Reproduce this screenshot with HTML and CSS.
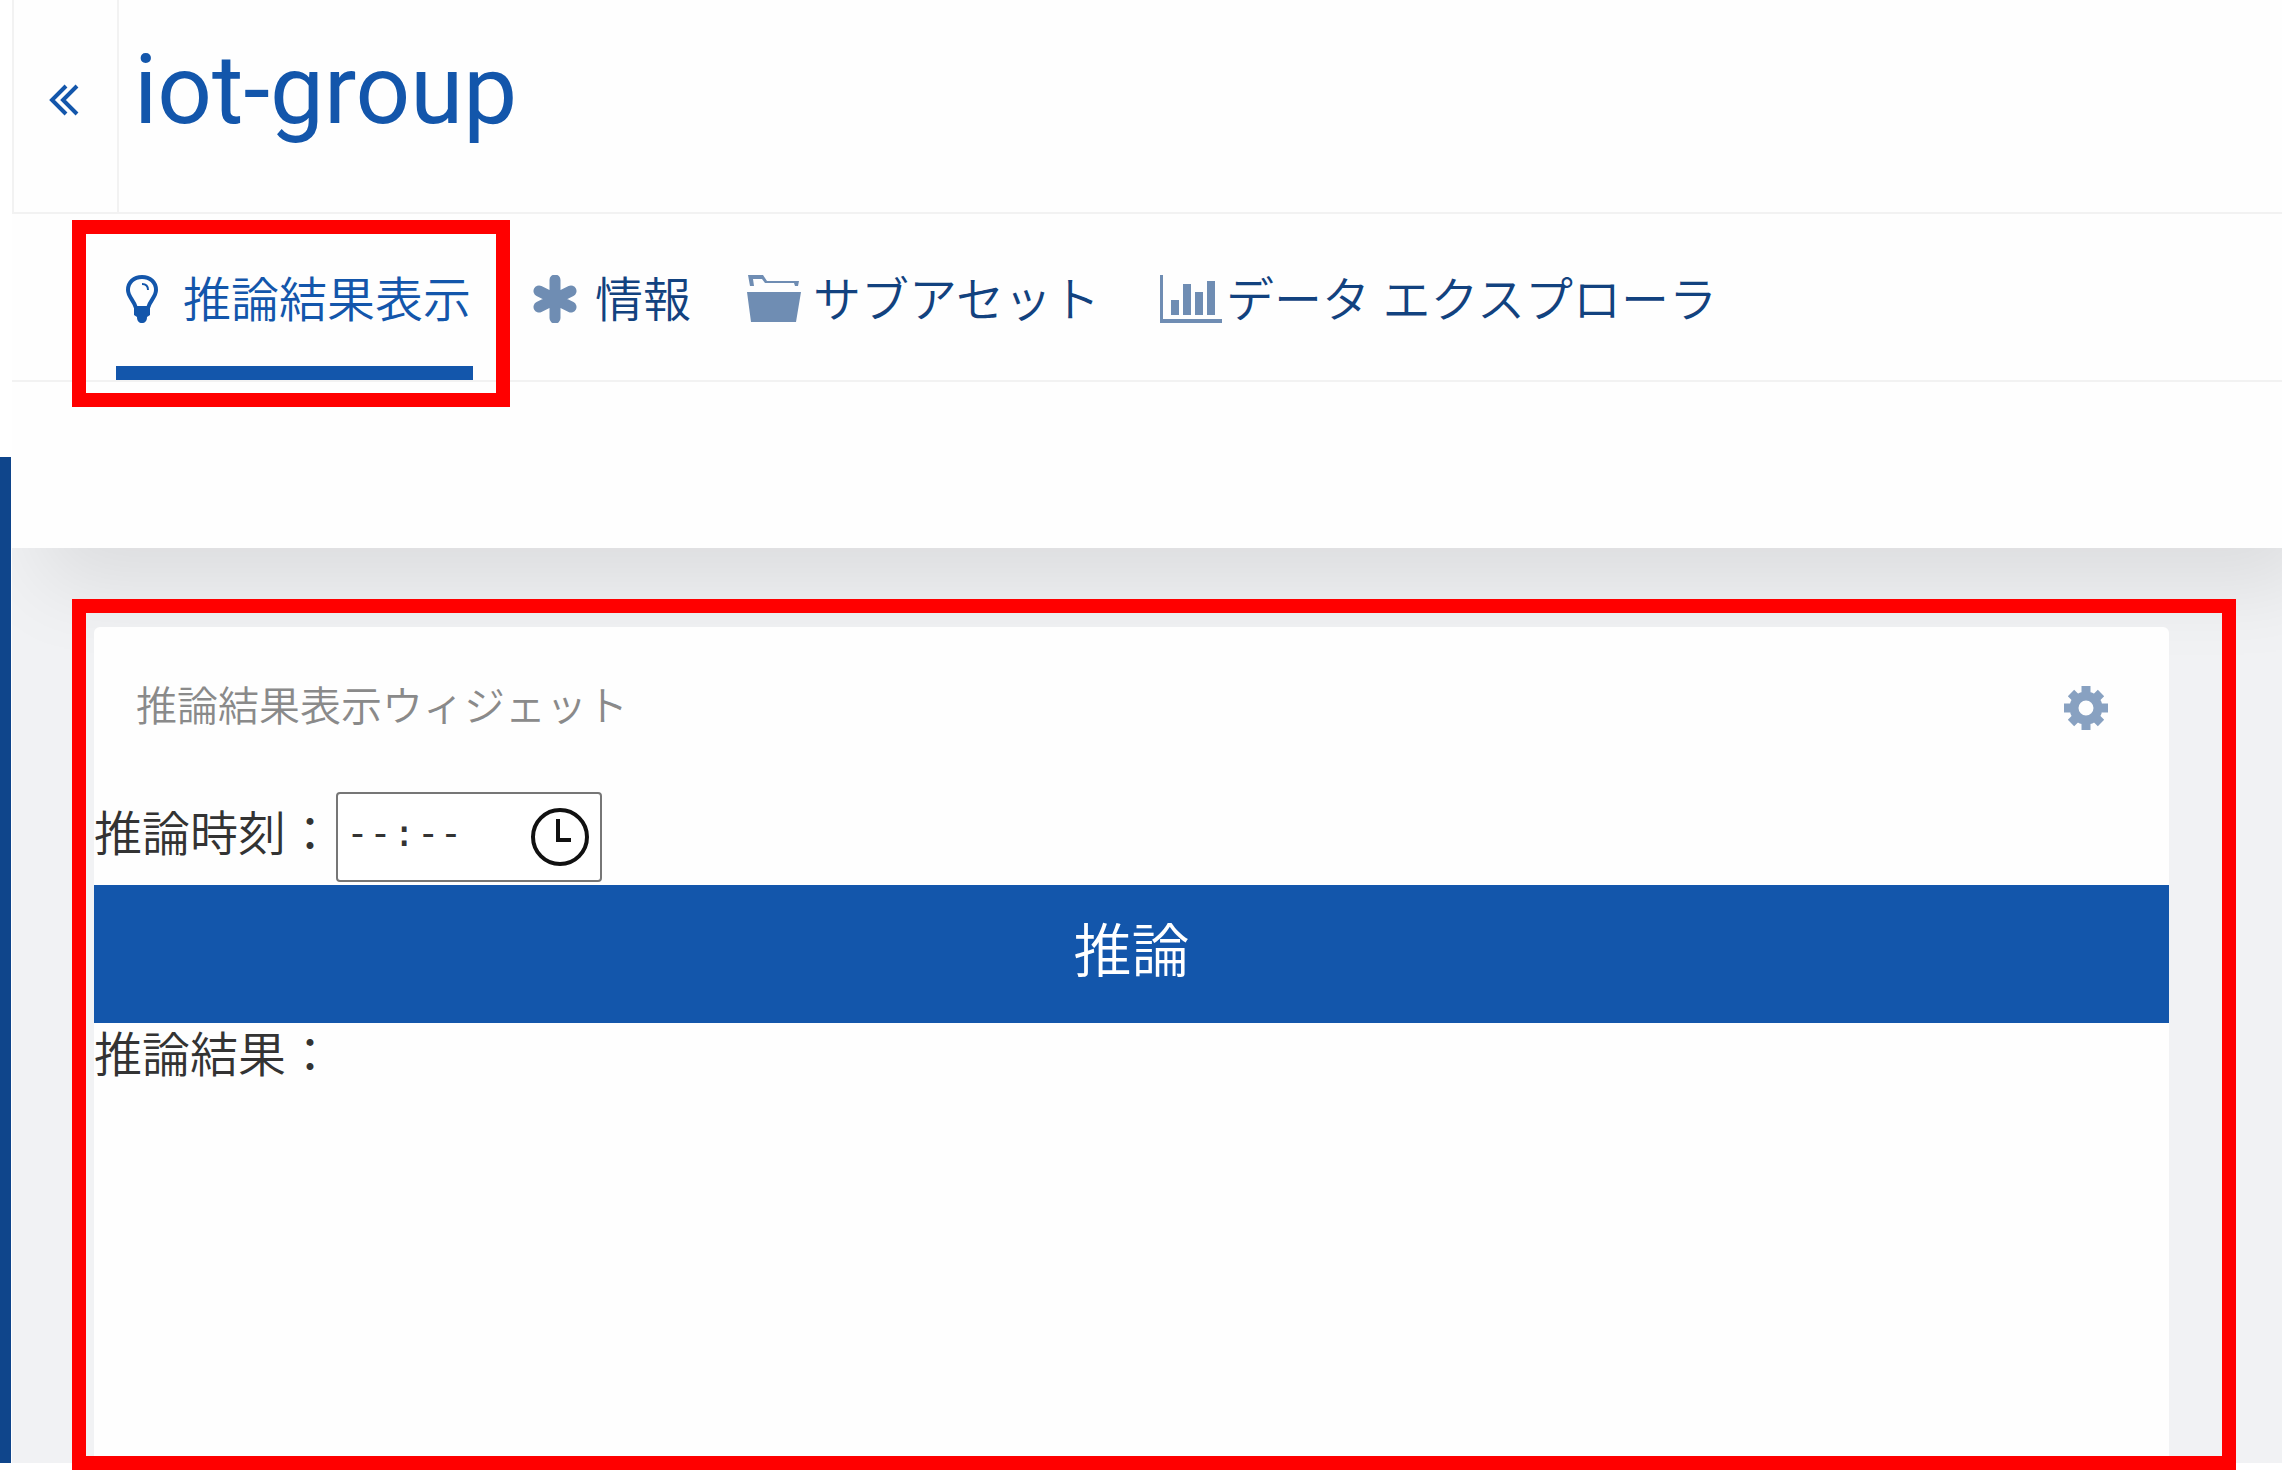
FILE: index.html
```
<!DOCTYPE html>
<html lang="ja">
<head>
    <meta charset="UTF-8">
    <title>iot-group</title>
    <link rel="stylesheet" href="styles.css">
</head>
<body>
    <div class="sidebar"></div>
    <div class="page">
        <header class="page-header">
            <div class="title-bar">
                <button class="collapse" type="button" aria-label="戻る">
                    <svg class="collapse-icon" viewBox="0 0 30 32"><path d="M17 2 3 16l14 14M28 2 14 16l14 14"/></svg>
                </button>
                <h1>iot-group</h1>
            </div>
            <nav class="tabs">
                <a class="tab active" href="#result">
                    <svg class="icon bulb" viewBox="0 0 32 48">
                        <path class="line" d="M16 2C8 2 2 7 2 15c0 7 6 10 8 18h12c2-8 8-11 8-18C30 7 24 2 16 2z"/>
                        <path class="line thin" d="M16 9c4 0 6 2 6 6"/>
                        <path d="M8 32h16v8l-3 2c0 4-2 6-5 6s-5-2-5-6l-3-2z"/>
                    </svg>
                    <span class="tab-name">推論結果表示</span>
                </a>
                <a class="tab" href="#info">
                    <svg class="icon asterisk" viewBox="0 0 44 48"><path class="line" d="M22 5v38M6 16l32 16M38 16 6 32"/></svg>
                    <span class="tab-name">情報</span>
                </a>
                <a class="tab folder-tab" href="#assets">
                    <svg class="icon folder" viewBox="0 0 54 48"><path d="M1 0h15l4 6h32l-1 5h-3l-1-3H18l-3-4H6l1 7H3zM0 17h54l-5 30H4z"/></svg>
                    <span class="tab-name">サブアセット</span>
                </a>
                <a class="tab chart-tab" href="#explorer">
                    <svg class="icon chart" viewBox="0 0 62 48"><path d="M0 0h3v44h59v4H0zM11 25h8v15h-8zM23 9h8v31h-8zM35 17h8v23h-8zM47 6h8v34h-8z"/></svg>
                    <span class="tab-name">データ エクスプローラ</span>
                </a>
            </nav>
        </header>
        <main class="dashboard">
            <div class="highlight">
                <section class="widget">
                    <div class="widget-header">
                        <h2>推論結果表示ウィジェット</h2>
                        <button class="settings" type="button" aria-label="設定">
                            <svg class="gear" viewBox="-22 -22 44 44">
                                <circle r="12"/>
                                <path d="M0-22v6M0 16v6M-22 0h6M16 0h6M-15-15l4 4M11 11l4 4M-15 15l4-4M11-11l4-4"/>
                            </svg>
                        </button>
                    </div>
                    <div class="time-row">
                        <label for="time">推論時刻：</label>
                        <input id="time" type="time">
                    </div>
                    <button class="run" type="button">推論</button>
                    <p class="result">推論結果：</p>
                </section>
            </div>
        </main>
    </div>
</body>
</html>
```

FILE: styles.css
```
* {
    box-sizing: border-box;
}
body {
    margin: 0;
    display: flex;
    min-height: 100vh;
    overflow-x: hidden;
    background: #fff;
    color: #333;
    font-family: "Noto Sans", "Noto Sans CJK JP", sans-serif;
    font-size: 48px;
    font-weight: 350;
}
button {
    border: 0;
    padding: 0;
    background: none;
    font: inherit;
}
h1, h2, p {
    margin: 0;
    font-weight: 350;
}
.sidebar {
    flex: none;
    width: 12px;
    margin: 457px 0 7px;
    background: #0f458b;
    border-right: 1px solid #fff;
    position: relative;
    z-index: 2;
}
.page {
    flex: 1;
    min-width: 0;
    display: flex;
    flex-direction: column;
}

/* header */
.page-header {
    position: relative;
    z-index: 1;
    height: 548px;
    background: #fefefe;
    box-shadow: 30px 36px 80px rgba(0, 0, 0, 0.09);
    clip-path: inset(0 0 -120px 0);
}
.title-bar {
    display: flex;
    height: 214px;
    border-bottom: 2px solid #f2f2f2;
    border-left: 2px solid #f2f2f2;
}
.collapse {
    width: 105px;
    padding: 0 4px 18px 0;
    border-right: 2px solid #f2f2f2;
}
.collapse-icon {
    width: 30px;
    height: 32px;
    fill: none;
    stroke: #1356ab;
    stroke-width: 4;
}
h1 {
    margin-left: 15px;
    color: #1356ab;
    font-family: Roboto, sans-serif;
    font-size: 96px;
    font-weight: 400;
    line-height: 180px;
}
.tabs {
    display: flex;
    gap: 56px;
    height: 168px;
    padding-left: 104px;
    border-bottom: 2px solid #f2f2f2;
}
.tab {
    position: relative;
    display: flex;
    align-items: center;
    gap: 18px;
    padding-top: 18px;
    border-bottom: 14px solid transparent;
    color: #12427f;
    text-decoration: none;
    white-space: nowrap;
    line-height: 72px;
}
.tab.active {
    gap: 25px;
    margin-right: 4px;
    padding-left: 10px;
    padding-right: 2px;
    color: #1356ab;
    border-bottom-color: #1356ab;
}
/* red frame round the open tab */
.tab.active::after {
    content: "";
    position: absolute;
    inset: 6px -37px -41px -44px;
    border: 14px solid #f00;
}
.folder-tab {
    gap: 12px;
}
.chart-tab {
    gap: 4px;
    margin-left: 4px;
}
.icon {
    flex: none;
    height: 48px;
    fill: #6f8db3;
}
.bulb {
    width: 32px;
    fill: #1356ab;
}
.bulb .line {
    fill: none;
    stroke: #1356ab;
    stroke-width: 4;
}
.bulb .thin {
    stroke-width: 2;
}
.asterisk {
    width: 44px;
}
.asterisk .line {
    stroke: #6f8db3;
    stroke-width: 11;
    stroke-linecap: round;
}
.folder {
    width: 54px;
}
.chart {
    width: 62px;
}

/* dashboard */
.dashboard {
    flex: 1;
    display: flex;
    margin-bottom: 7px;
    padding: 51px 46px 0 60px;
    background: #f1f2f4;
}
.highlight {
    position: relative;
    z-index: 2;
    flex: 1;
    display: flex;
    margin-bottom: -7px;
    padding: 14px 53px 0 8px;
    border: 14px solid #f00;
}
.widget {
    flex: 1;
    border-radius: 6px 6px 0 0;
    background: #fefefe;
}
.widget-header {
    display: flex;
    justify-content: space-between;
    align-items: center;
    height: 162px;
    padding: 0 61px 0 42px;
}
h2 {
    padding-bottom: 10px;
    color: #8a8a8a;
    font-size: 41px;
}
.gear {
    display: block;
    width: 44px;
    height: 44px;
    fill: none;
    stroke: #88a1c1;
    stroke-width: 9;
}
.time-row {
    display: flex;
    align-items: center;
    height: 96px;
}
.time-row label {
    padding-bottom: 8px;
    line-height: 72px;
}
#time {
    width: 266px;
    height: 90px;
    margin-left: 2px;
    padding: 0 10px 0 7px;
    border: 2px solid #767676;
    border-radius: 4px;
    background: #fff;
    color: #333;
    font-family: "DejaVu Sans Mono", monospace;
    font-size: 38px;
}
#time::-webkit-datetime-edit {
    padding-bottom: 8px;
}
#time::-webkit-datetime-edit-ampm-field {
    display: none;
}
#time::-webkit-calendar-picker-indicator {
    width: 60px;
    height: 60px;
    margin: 0;
    padding: 0;
    background: url("data:image/svg+xml,%3Csvg xmlns='http://www.w3.org/2000/svg' viewBox='0 0 60 60' fill='none' stroke='%23111' stroke-width='4'%3E%3Ccircle cx='30' cy='30' r='27'/%3E%3Cpath d='M28 12v21h13'/%3E%3C/svg%3E") center / 60px 60px no-repeat;
}
.run {
    display: block;
    width: 100%;
    height: 138px;
    padding-bottom: 14px;
    background: #1356ab;
    color: #fff;
    font-size: 58px;
}
.result {
    line-height: 62px;
}
```
